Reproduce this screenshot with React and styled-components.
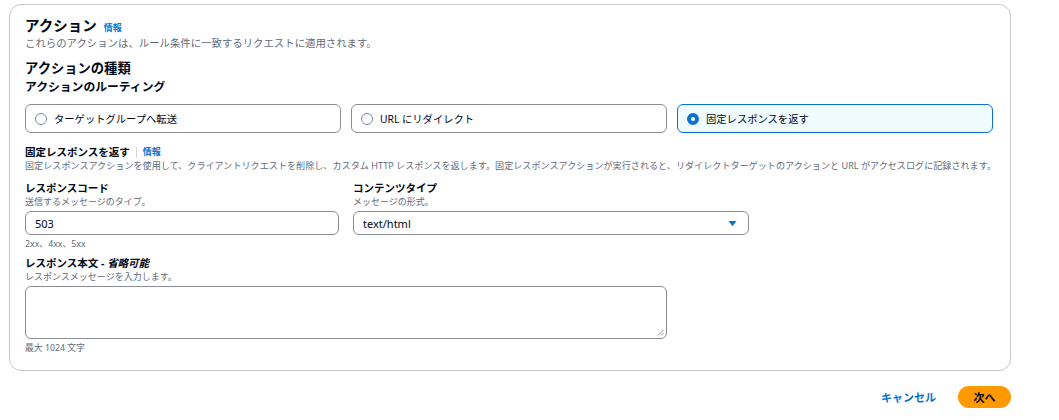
import React from 'react';
import styled, {createGlobalStyle} from 'styled-components';

const GlobalStyle = createGlobalStyle`
    body {
        margin: 0;
        font-family: "Noto Sans", "Noto Sans CJK JP", sans-serif;
        color: #000716;
        background: #ffffff;
    }
`;

const tiles = [
    {id: 'forward', label: 'ターゲットグループへ転送'},
    {id: 'redirect', label: 'URL にリダイレクト'},
    {id: 'fixed', label: '固定レスポンスを返す'},
];

const App = () => {

    //STATE
    const selected = 'fixed';

    return(
        <Page>
            <GlobalStyle />
            <Card>
                <TitleRow>
                    <Title>アクション</Title>
                    <InfoLink>情報</InfoLink>
                </TitleRow>
                <Description>これらのアクションは、ルール条件に一致するリクエストに適用されます。</Description>

                <SectionTitle>アクションの種類</SectionTitle>
                <SubTitle>アクションのルーティング</SubTitle>

                <TileRow>
                    {tiles.map(t => (
                        <Tile key={t.id} $active={t.id === selected}>
                            <Radio $active={t.id === selected} />
                            <span>{t.label}</span>
                        </Tile>
                    ))}
                </TileRow>

                <FieldHeader>
                    <Label>固定レスポンスを返す</Label>
                    <Divider />
                    <InfoLink>情報</InfoLink>
                </FieldHeader>
                <SmallText $nowrap>固定レスポンスアクションを使用して、クライアントリクエストを削除し、カスタム HTTP レスポンスを返します。固定レスポンスアクションが実行されると、リダイレクトターゲットのアクションと URL がアクセスログに記録されます。</SmallText>

                <FieldGrid>
                    <Field>
                        <Label>レスポンスコード</Label>
                        <SmallText>送信するメッセージのタイプ。</SmallText>
                        <Input>503</Input>
                        <Hint>2xx、4xx、5xx</Hint>
                    </Field>
                    <Field>
                        <Label>コンテンツタイプ</Label>
                        <SmallText>メッセージの形式。</SmallText>
                        <Input>
                            <span>text/html</span>
                            <Caret viewBox="0 0 10 8">
                                <path d="M0.5 1h9L5 7z" fill="#0972d3" />
                            </Caret>
                        </Input>
                    </Field>
                </FieldGrid>

                <Field>
                    <Label>レスポンス本文 - <em>省略可能</em></Label>
                    <SmallText>レスポンスメッセージを入力します。</SmallText>
                    <TextArea>
                        <Grip viewBox="0 0 8 8">
                            <path d="M7.5 1L1 7.5M7.5 4.5L4.5 7.5" stroke="#5f6b7a" strokeWidth="0.8" />
                        </Grip>
                    </TextArea>
                    <Hint>最大 1024 文字</Hint>
                </Field>
            </Card>

            <Footer>
                <CancelButton>キャンセル</CancelButton>
                <PrimaryButton>次へ</PrimaryButton>
            </Footer>
        </Page>
    );
};

const Page = styled.div`
    width: 1002px;
    padding: 4px 0 0 9px;
`;

const Card = styled.div`
    border: 1px solid #c6c6cd;
    border-radius: 12px;
    padding: 9px 15px 10px 15px;
    display: flex;
    flex-direction: column;
`;

const TitleRow = styled.div`
    display: flex;
    align-items: baseline;
    gap: 7px;
    height: 22px;
`;

const Title = styled.h2`
    margin: 0;
    font-size: 14.5px;
    font-weight: 700;
    line-height: 22px;
`;

const InfoLink = styled.a`
    font-size: 9px;
    font-weight: 700;
    color: #0972d3;
    line-height: 14px;
`;

const Description = styled.div`
    font-size: 10.4px;
    color: #5f6b7a;
    line-height: 14px;
`;

const SectionTitle = styled.div`
    margin-top: 8px;
    font-size: 13.3px;
    font-weight: 700;
    line-height: 20px;
`;

const SubTitle = styled.div`
    font-size: 11.8px;
    font-weight: 700;
    line-height: 17px;
`;

const TileRow = styled.div`
    margin-top: 9px;
    display: grid;
    grid-template-columns: 316px 316px 316px;
    gap: 10px;
`;

const Tile = styled.div`
    height: 29px;
    box-sizing: border-box;
    border: 1px solid ${p => (p.$active ? '#0972d3' : '#8c8c94')};
    background: ${p => (p.$active ? '#f0fbff' : '#ffffff')};
    border-radius: 6px;
    display: flex;
    align-items: center;
    gap: 7px;
    padding-left: 9px;
    font-size: 10.3px;
    color: #000716;
`;

const Radio = styled.span`
    width: 12px;
    height: 12px;
    box-sizing: border-box;
    border-radius: 50%;
    border: ${p => (p.$active ? '4px solid #0972d3' : '1.5px solid #7d8998')};
    background: #ffffff;
`;

const FieldHeader = styled.div`
    margin-top: 12px;
    display: flex;
    align-items: center;
    gap: 6px;
    height: 14px;
`;

const Label = styled.div`
    font-size: 10.5px;
    font-weight: 700;
    line-height: 14px;

    em {
        font-style: italic;
    }
`;

const Divider = styled.span`
    width: 1px;
    height: 11px;
    background: #d1d5db;
`;

const SmallText = styled.div`
    font-size: ${p => (p.$nowrap ? '9.1px' : '9px')};
    color: #5f6b7a;
    line-height: 13px;
    white-space: ${p => (p.$nowrap ? 'nowrap' : 'normal')};
`;

const FieldGrid = styled.div`
    margin-top: 9px;
    display: grid;
    grid-template-columns: 314px 396px;
    gap: 14px;
`;

const Field = styled.div`
    display: flex;
    flex-direction: column;
    margin-bottom: 5px;
`;

const Input = styled.div`
    margin-top: 3px;
    height: 24px;
    box-sizing: border-box;
    border: 1px solid #8c8c94;
    border-radius: 6px;
    display: flex;
    align-items: center;
    justify-content: space-between;
    padding: 0 11px 0 9px;
    font-size: 11px;
`;

const Caret = styled.svg`
    width: 9px;
    height: 7px;
`;

const Hint = styled.div`
    margin-top: 2px;
    font-size: 8.8px;
    color: #5f6b7a;
    line-height: 14px;
`;

const TextArea = styled.div`
    margin-top: 3px;
    width: 642px;
    height: 53px;
    box-sizing: border-box;
    border: 1px solid #8c8c94;
    border-radius: 6px;
    display: flex;
    align-items: flex-end;
    justify-content: flex-end;
    padding: 2px;
`;

const Grip = styled.svg`
    width: 7px;
    height: 7px;
`;

const Footer = styled.div`
    margin-top: 15px;
    display: flex;
    justify-content: flex-end;
    align-items: center;
    gap: 22px;
`;

const CancelButton = styled.button`
    border: none;
    background: none;
    font-family: inherit;
    font-size: 11px;
    font-weight: 700;
    color: #0972d3;
    padding: 0;
`;

const PrimaryButton = styled.button`
    border: none;
    background: #ff9900;
    border-radius: 12px;
    width: 53px;
    height: 22px;
    font-family: inherit;
    font-size: 11px;
    font-weight: 700;
    color: #000716;
`;

export default App;
